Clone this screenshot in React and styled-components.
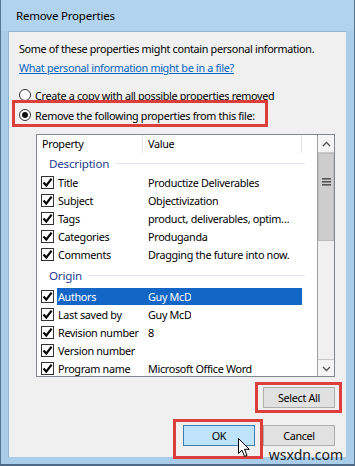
import React from "react";
import styled, { createGlobalStyle } from "styled-components";

const Global = createGlobalStyle`
  html, body { margin: 0; padding: 0; background: #a9cbe7; }
  #root { width: 355px; height: 466px; }
`;

const FONT = `"Noto Sans", "Open Sans", sans-serif`;

const Window = styled.div`
  position: relative;
  box-sizing: border-box;
  width: 355px;
  height: 466px;
  background: #aacdea;
  border-left: 1px solid #56758f;
  border-right: 1px solid #56758f;
  border-bottom: 2px solid #4c6a85;
  display: flex;
  flex-direction: column;
  font-family: ${FONT};
  font-size: 10.8px;
  letter-spacing: -0.32px;
  color: #000;
  overflow: hidden;
`;

const TitleBar = styled.div`
  height: 31px;
  flex: none;
  display: flex;
  align-items: center;
  padding-left: 15px;
  font-size: 11.5px;
  letter-spacing: -0.2px;
  color: #000;
  background: #b2d3ee;
`;

const Panel = styled.div`
  flex: 1;
  margin: 0 8px 7px 7px;
  background: #f0f0f0;
  border-top: 1px solid #93b4d0;
  border-left: 1px solid #93b4d0;
  padding: 7px 11px 0 10px;
  display: flex;
  flex-direction: column;
`;

const Line = styled.div`
  line-height: 19px;
  white-space: nowrap;
`;

const Link = styled.a`
  line-height: 19px;
  color: #0563c1;
  text-decoration: underline;
  white-space: nowrap;
`;

const RadioRow = styled.div`
  position: relative;
  height: 20px;
  display: flex;
  align-items: center;
  gap: 4px;
  margin-top: ${(p) => p.$mt || 0}px;
  white-space: nowrap;
`;

const Radio = styled.span`
  box-sizing: border-box;
  width: 12px;
  height: 12px;
  border-radius: 50%;
  border: 1px solid #333;
  background: #fff;
  display: inline-flex;
  align-items: center;
  justify-content: center;
  &::after {
    content: "";
    width: 6px;
    height: 6px;
    border-radius: 50%;
    background: ${(p) => (p.$checked ? "#111" : "transparent")};
  }
`;

const Annotation = styled.div`
  position: absolute;
  box-sizing: border-box;
  left: ${(p) => p.$left}px;
  top: ${(p) => p.$top}px;
  width: ${(p) => p.$width}px;
  height: ${(p) => p.$height}px;
  border: 3px solid #dc3f3b;
  pointer-events: none;
`;

const ListBox = styled.div`
  box-sizing: border-box;
  margin: 9px 0 0 17px;
  width: 299px;
  height: 243px;
  border: 1px solid #828790;
  background: #fff;
  display: grid;
  grid-template-columns: 1fr 17px;
  overflow: hidden;
`;

const ListArea = styled.div`
  display: flex;
  flex-direction: column;
`;

const Header = styled.div`
  display: flex;
  height: 18px;
  flex: none;
`;

const HeaderCell = styled.div`
  box-sizing: border-box;
  width: ${(p) => p.$width}px;
  flex: ${(p) => (p.$width ? "none" : 1)};
  padding-left: 5px;
  line-height: 18px;
  border-right: ${(p) => (p.$last ? "none" : "1px solid #e3e3e3")};
  white-space: nowrap;
`;

const Group = styled.div`
  height: ${(p) => p.$h}px;
  flex: none;
  display: flex;
  align-items: center;
  padding: ${(p) => p.$pt || 0}px 12px 0 12px;
  box-sizing: border-box;
  gap: 6px;
  color: #1e3c8f;
  font-size: 11.6px;
  letter-spacing: -0.2px;
  width: 280px;
  &::after {
    content: "";
    flex: 1;
    height: 1px;
    background: #e2e6ec;
  }
`;

const Row = styled.div`
  display: flex;
  align-items: center;
  height: 18px;
  flex: none;
`;

const CheckCell = styled.div`
  width: 20px;
  flex: none;
  display: flex;
  align-items: center;
  padding-left: 4px;
  box-sizing: border-box;
`;

const Checkbox = styled.span`
  box-sizing: border-box;
  width: 13px;
  height: 13px;
  border: 1px solid #333;
  background: #fff;
  display: inline-flex;
  align-items: center;
  justify-content: center;
`;

const Item = styled.div`
  display: flex;
  align-items: center;
  width: 245px;
  height: 17px;
  background: ${(p) => (p.$selected ? "#1466c6" : "transparent")};
  color: ${(p) => (p.$selected ? "#fff" : "#000")};
  white-space: nowrap;
`;

const Name = styled.span`
  width: 86px;
  flex: none;
  padding-left: 1px;
  box-sizing: border-box;
`;

const Value = styled.span`
  padding-left: 5px;
  overflow: hidden;
  text-overflow: ellipsis;
`;

const ScrollBar = styled.div`
  display: flex;
  flex-direction: column;
  border-left: 1px solid #a0a0a0;
  background: #f0f0f0;
`;

const ScrollButton = styled.div`
  height: 17px;
  flex: none;
  display: flex;
  align-items: center;
  justify-content: center;
  background: #f4f4f4;
  border-bottom: ${(p) => (p.$top ? "1px solid #c9c9c9" : "none")};
  border-top: ${(p) => (p.$top ? "none" : "1px solid #c9c9c9")};
`;

const Track = styled.div`
  flex: 1;
  display: flex;
  flex-direction: column;
`;

const Thumb = styled.div`
  height: 88px;
  background: #cdcdcd;
  border: 1px solid #bcbcbc;
  box-sizing: border-box;
  display: flex;
  justify-content: center;
  padding-top: 24px;
`;

const ButtonRow = styled.div`
  display: flex;
  justify-content: flex-end;
  gap: 8px;
  margin-top: ${(p) => p.$mt}px;
`;

const Button = styled.div`
  position: relative;
  box-sizing: border-box;
  width: 72px;
  height: 21px;
  display: flex;
  align-items: center;
  justify-content: center;
  background: ${(p) => (p.$default ? "#bfe3fb" : "#e1e1e1")};
  border: 1px solid ${(p) => (p.$default ? "#3c7fb1" : "#adadad")};
  white-space: nowrap;
`;

const Cursor = styled.svg`
  position: absolute;
  left: 54px;
  top: 12px;
`;

const Watermark = styled.div`
  position: absolute;
  right: 11px;
  bottom: 2px;
  font-family: ${FONT};
  font-size: 14px;
  letter-spacing: 0;
  line-height: 14px;
  color: #1c1c1c;
`;

const Check = () => (
  <svg width="11" height="11" viewBox="0 0 11 11">
    <path d="M1.5 5.5 L4.3 8.6 L9.6 1.6" fill="none" stroke="#000" strokeWidth="2.2" />
  </svg>
);

const rows1 = [
  ["Title", "Productize Deliverables"],
  ["Subject", "Objectivization"],
  ["Tags", "product, deliverables, optim\u2026"],
  ["Categories", "Produganda"],
  ["Comments", "Dragging the future into now."],
];

const rows2 = [
  ["Authors", "Guy McD", true],
  ["Last saved by", "Guy McD"],
  ["Revision number", "8"],
  ["Version number", ""],
  ["Program name", "Microsoft Office Word"],
];

const PropRow = ({ name, value, selected }) => (
  <Row>
    <CheckCell>
      <Checkbox>
        <Check />
      </Checkbox>
    </CheckCell>
    <Item $selected={selected}>
      <Name>{name}</Name>
      <Value>{value}</Value>
    </Item>
  </Row>
);

export default function App() {
  return (
    <>
      <Global />
      <Window>
        <TitleBar>Remove Properties</TitleBar>
        <Panel>
          <Line>Some of these properties might contain personal information.</Line>
          <Line>
            <Link>What personal information might be in a file?</Link>
          </Line>
          <RadioRow $mt={8}>
            <Radio />
            Create a copy with all possible properties removed
          </RadioRow>
          <RadioRow>
            <Radio $checked />
            Remove the following properties from this file:
            <Annotation $left={-7} $top={-5} $width={256} $height={27} />
          </RadioRow>
          <ListBox>
            <ListArea>
              <Header>
                <HeaderCell $width={106}>Property</HeaderCell>
                <HeaderCell $width={159}>Value</HeaderCell>
                <HeaderCell $last />
              </Header>
              <Group $h={20}>Description</Group>
              {rows1.map(([n, v]) => (
                <PropRow key={n} name={n} value={v} />
              ))}
              <Group $h={24} $pt={1}>Origin</Group>
              {rows2.map(([n, v, s]) => (
                <PropRow key={n} name={n} value={v} selected={s} />
              ))}
            </ListArea>
            <ScrollBar>
              <ScrollButton $top>
                <svg width="9" height="6" viewBox="0 0 9 6">
                  <path d="M1 5 L4.5 1.5 L8 5" fill="none" stroke="#555" strokeWidth="1.3" />
                </svg>
              </ScrollButton>
              <Track>
                <Thumb>
                  <svg width="9" height="8" viewBox="0 0 9 8">
                    <rect x="0" y="0" width="9" height="1.6" fill="#555" />
                    <rect x="0" y="3" width="9" height="1.6" fill="#555" />
                    <rect x="0" y="6" width="9" height="1.6" fill="#555" />
                  </svg>
                </Thumb>
              </Track>
              <ScrollButton>
                <svg width="9" height="6" viewBox="0 0 9 6">
                  <path d="M1 1 L4.5 4.5 L8 1" fill="none" stroke="#555" strokeWidth="1.3" />
                </svg>
              </ScrollButton>
            </ScrollBar>
          </ListBox>
          <ButtonRow $mt={10}>
            <Button>
              Select All
              <Annotation $left={-9} $top={-6} $width={87} $height={31} />
            </Button>
          </ButtonRow>
          <ButtonRow $mt={17}>
            <Button $default>
              OK
              <Annotation $left={-11} $top={-7} $width={90} $height={40} />
              <Cursor width="14" height="20" viewBox="0 0 14 20">
                <path
                  d="M0.5 0.5 L0.5 15.5 L4 12.2 L6.6 18.4 L9 17.4 L6.5 11.3 L11.3 11.3 Z"
                  fill="#fff"
                  stroke="#000"
                  strokeWidth="1"
                  strokeLinejoin="round"
                />
              </Cursor>
            </Button>
            <Button>Cancel</Button>
          </ButtonRow>
        </Panel>
        <Watermark>wsxdn.com</Watermark>
      </Window>
    </>
  );
}
